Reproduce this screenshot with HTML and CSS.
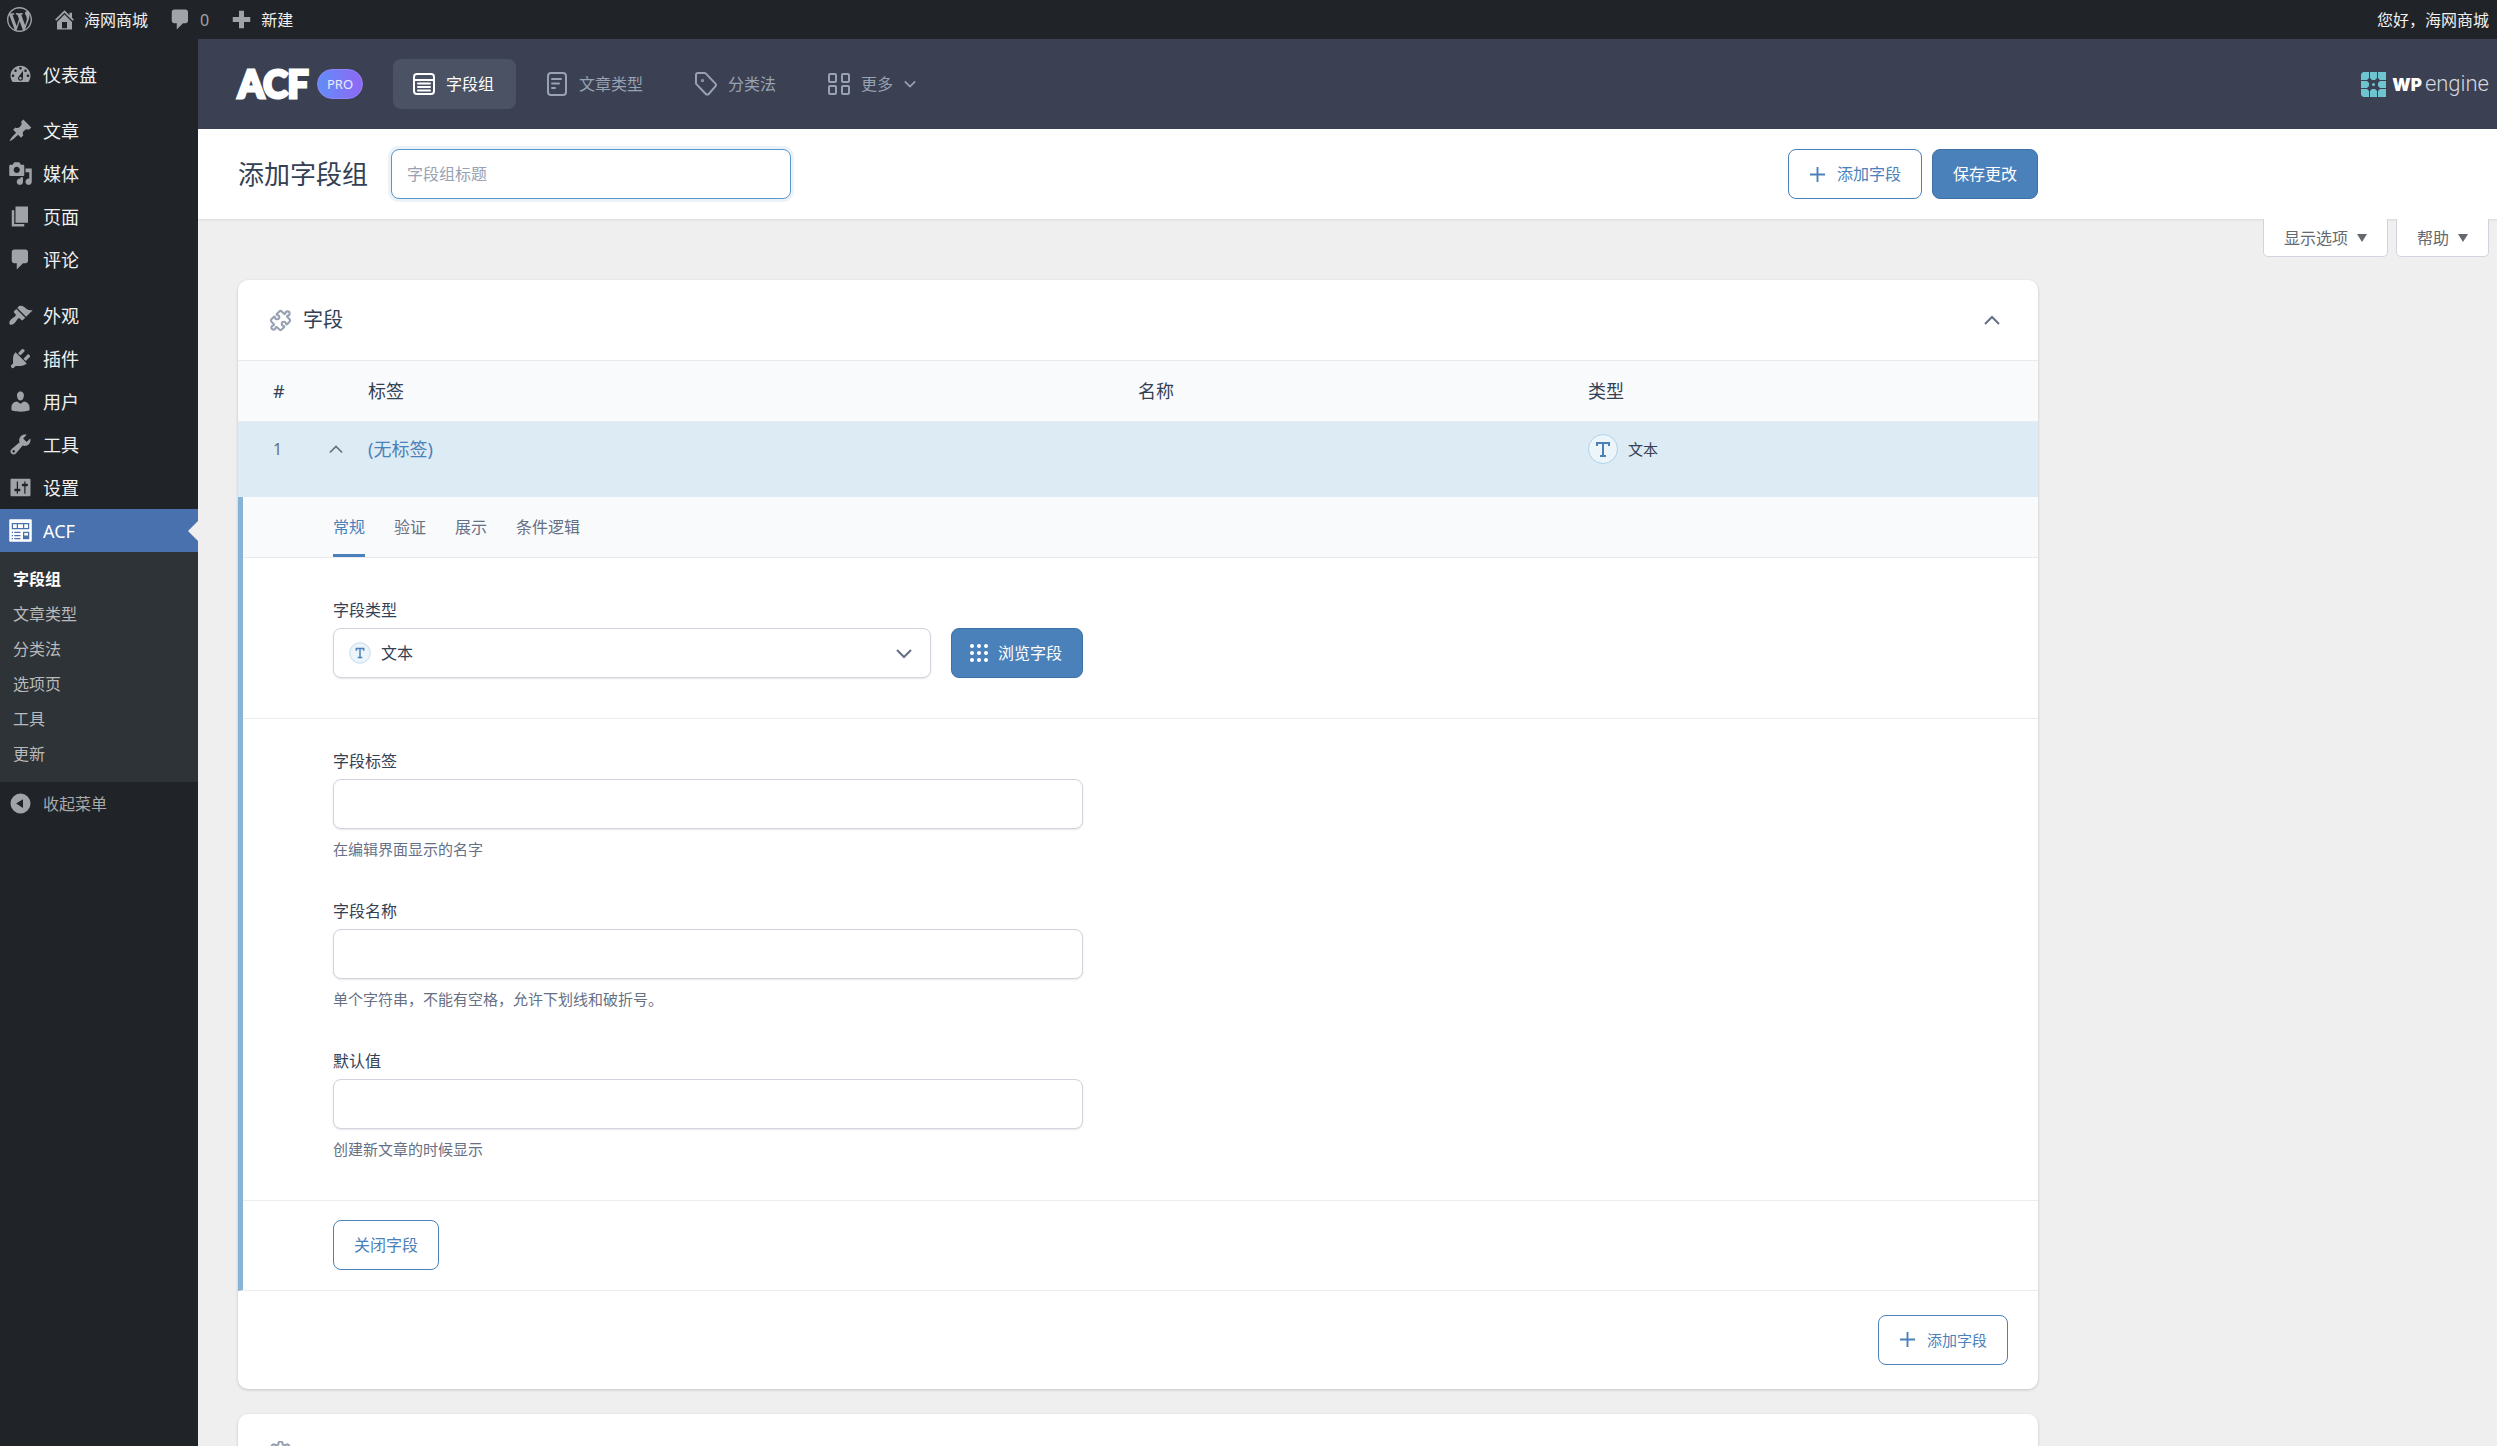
FILE: index.html
```html
<!DOCTYPE html>
<html lang="zh-CN">
<head>
<meta charset="utf-8">
<title>添加字段组</title>
<link rel="stylesheet" href="styles.css">
</head>
<body>
<div class="app">
  <header class="adminbar">
    <a class="adminbar-item adminbar-wp" href="#" aria-label="WordPress"><svg class="dash" viewBox="0 0 20 20"><path d="M20 10c0-5.51-4.49-10-10-10C4.48 0 0 4.49 0 10c0 5.52 4.48 10 10 10 5.51 0 10-4.48 10-10zM7.78 15.37L4.37 6.22c.55-.02 1.17-.08 1.17-.08.5-.06.44-1.13-.06-1.11 0 0-1.45.11-2.37.11-.18 0-.37 0-.58-.01C4.12 2.69 6.87 1.11 10 1.11c2.33 0 4.45.87 6.05 2.34-.68-.11-1.65.39-1.65 1.58 0 .74.45 1.36.9 2.1.35.61.55 1.36.55 2.46 0 1.49-1.4 5-1.4 5l-3.03-8.37c.54-.02.82-.17.82-.17.5-.05.44-1.25-.06-1.22 0 0-1.44.12-2.38.12-.87 0-2.33-.12-2.33-.12-.5-.03-.56 1.2-.06 1.22l.92.08 1.26 3.41zM17.41 10c.24-.64.74-1.87.43-4.25.7 1.29 1.05 2.71 1.05 4.25 0 3.29-1.73 6.24-4.4 7.78.97-2.59 1.94-5.2 2.92-7.78zM6.1 18.09C3.12 16.65 1.11 13.53 1.11 10c0-1.3.23-2.48.72-3.59C3.25 10.3 4.67 14.2 6.1 18.09zm4.03-6.63l2.58 6.98c-.86.29-1.76.45-2.71.45-.79 0-1.57-.11-2.29-.33.81-2.38 1.62-4.74 2.42-7.1z"/></svg></a>
    <a class="adminbar-item" href="#"><svg class="dash" viewBox="0 0 20 20"><path d="M16 8.5l1.53 1.53-1.06 1.06L10 4.6l-6.47 6.49-1.06-1.06L10 2.5l4 4v-2h2v4zm-6-2.46l6 5.99V18H4v-5.97zM12 17v-5H8v5h4z"/></svg>海网商城</a>
    <a class="adminbar-item adminbar-count" href="#"><svg class="dash" viewBox="0 0 20 20"><path d="M5 2h9c1.1 0 2 .9 2 2v7c0 1.1-.9 2-2 2h-2l-5 5v-5H5c-1.1 0-2-.9-2-2V4c0-1.1.9-2 2-2z"/></svg>0</a>
    <a class="adminbar-item" href="#"><svg class="dash" viewBox="0 0 20 20"><path d="M17 8v4h-5v5H8v-5H3V8h5V3h4v5z"/></svg>新建</a>
    <a class="adminbar-item adminbar-user" href="#">您好，海网商城</a>
  </header>

  <div class="shell">
    <nav class="sidebar" aria-label="主菜单">
      <ul class="menu">
        <li><a class="menu-link" href="#"><svg class="dash" viewBox="0 0 20 20"><path d="M3.76 16h12.48c1.1-1.37 1.76-3.11 1.76-5 0-4.42-3.58-8-8-8s-8 3.58-8 8c0 1.89.66 3.63 1.76 5zM10 4c.55 0 1 .45 1 1s-.45 1-1 1-1-.45-1-1 .45-1 1-1zM6 6c.55 0 1 .45 1 1s-.45 1-1 1-1-.45-1-1 .45-1 1-1zm8 0c.55 0 1 .45 1 1s-.45 1-1 1-1-.45-1-1 .45-1 1-1zm-5.37 5.55L12 7v6c0 1.1-.9 2-2 2s-2-.9-2-2c0-.57.24-1.08.63-1.45zM4 10c.55 0 1 .45 1 1s-.45 1-1 1-1-.45-1-1 .45-1 1-1zm12 0c.55 0 1 .45 1 1s-.45 1-1 1-1-.45-1-1 .45-1 1-1zm-5 3c0-.55-.45-1-1-1s-1 .45-1 1 .45 1 1 1 1-.45 1-1z"/></svg>仪表盘</a></li>
        <li class="menu-group"><a class="menu-link" href="#"><svg class="dash" viewBox="0 0 20 20"><path d="M10.44 3.02l1.82-1.82 6.36 6.35-1.83 1.82c-1.05-.68-2.48-.57-3.41.36l-.75.75c-.92.93-1.04 2.35-.35 3.41l-1.83 1.82-2.41-2.41-2.8 2.79c-.42.42-3.38 2.71-3.8 2.29s1.86-3.39 2.28-3.81l2.79-2.79L4.1 9.36l1.83-1.82c1.05.69 2.48.57 3.4-.36l.75-.75c.93-.92 1.05-2.35.36-3.41z"/></svg>文章</a></li>
        <li><a class="menu-link" href="#"><svg class="dash" viewBox="0 0 20 20"><path d="M13 11V4c0-.55-.45-1-1-1h-1.67L9 1H5L3.67 3H2c-.55 0-1 .45-1 1v7c0 .55.45 1 1 1h10c.55 0 1-.45 1-1zM7 4.5c1.38 0 2.5 1.12 2.5 2.5S8.38 9.5 7 9.5 4.5 8.38 4.5 7 5.62 4.5 7 4.5zM14 6h5v10.5c0 1.38-1.12 2.5-2.5 2.5S14 17.88 14 16.5s1.12-2.5 2.5-2.5c.17 0 .34.02.5.05V9h-3V6zm-4 8.05V13h2v3.5c0 1.38-1.12 2.5-2.5 2.5S7 17.88 7 16.5 8.12 14 9.5 14c.17 0 .34.02.5.05z"/></svg>媒体</a></li>
        <li><a class="menu-link" href="#"><svg class="dash" viewBox="0 0 20 20"><path d="M6 15V2h10v13H6zm-1 1h8v2H3V5h2v11z"/></svg>页面</a></li>
        <li><a class="menu-link" href="#"><svg class="dash" viewBox="0 0 20 20"><path d="M5 2h9c1.1 0 2 .9 2 2v7c0 1.1-.9 2-2 2h-2l-5 5v-5H5c-1.1 0-2-.9-2-2V4c0-1.1.9-2 2-2z"/></svg>评论</a></li>
        <li class="menu-group"><a class="menu-link" href="#"><svg class="dash" viewBox="0 0 20 20"><path d="M14.48 11.06L7.41 3.99l1.5-1.5c.5-.56 2.3-.47 3.51.32 1.21.8 1.43 1.28 2.91 2.1 1.18.64 2.45 1.26 4.45.85zm-.71.71L6.7 4.7 4.93 6.47c-.39.39-.39 1.02 0 1.41l1.06 1.06c.39.39.39 1.03 0 1.42-.6.6-1.43 1.11-2.21 1.69-.35.26-.7.53-1.01.84C1.43 14.23.4 16.08 1.4 17.07c.99 1 2.84-.03 4.18-1.36.31-.31.58-.66.85-1.02.57-.78 1.08-1.61 1.69-2.21.39-.39 1.02-.39 1.41 0l1.06 1.06c.39.39 1.02.39 1.41 0z"/></svg>外观</a></li>
        <li><a class="menu-link" href="#"><svg class="dash" viewBox="0 0 20 20"><path d="M13.11 4.36L9.87 7.6 8 5.73l3.24-3.24c.35-.34 1.05-.2 1.56.32.52.51.66 1.21.31 1.55zm-8 1.77l.91-1.12 9.01 9.01-1.19.84c-.71.71-2.63 1.16-3.82 1.16H6.14L4.9 17.26c-.59.59-1.54.59-2.12 0-.59-.58-.59-1.53 0-2.12l1.24-1.24v-3.88c0-1.13.4-3.19 1.09-3.89zm7.26 3.97l3.24-3.24c.34-.35 1.04-.21 1.55.31.52.51.66 1.21.31 1.55l-3.24 3.25z"/></svg>插件</a></li>
        <li><a class="menu-link" href="#"><svg class="dash" viewBox="0 0 20 20"><path d="M10 9.25c-2.27 0-2.73-3.44-2.73-3.44C7 4.02 7.82 2 9.97 2c2.16 0 2.98 2.02 2.71 3.81 0 0-.41 3.44-2.68 3.44zm0 2.57L12.72 10c2.39 0 4.52 2.33 4.52 4.53v2.49s-3.65 1.13-7.24 1.13c-3.65 0-7.24-1.13-7.24-1.13v-2.49c0-2.25 1.94-4.48 4.47-4.48z"/></svg>用户</a></li>
        <li><a class="menu-link" href="#"><svg class="dash" viewBox="0 0 20 20"><path d="M16.68 9.77c-1.34 1.34-3.3 1.67-4.95.99l-5.41 6.52c-.99.99-2.59.99-3.58 0s-.99-2.59 0-3.57l6.52-5.42c-.68-1.65-.35-3.61.99-4.95 1.28-1.28 3.12-1.62 4.72-1.06l-2.89 2.89 2.82 2.82 2.86-2.87c.53 1.58.18 3.39-1.08 4.65zM3.81 16.21c.4.39 1.04.39 1.43 0 .4-.4.4-1.04 0-1.43-.39-.4-1.03-.4-1.43 0-.39.39-.39 1.03 0 1.43z"/></svg>工具</a></li>
        <li><a class="menu-link" href="#"><svg class="dash" viewBox="0 0 20 20"><path d="M18 16V4c0-.55-.45-1-1-1H3c-.55 0-1 .45-1 1v12c0 .55.45 1 1 1h14c.55 0 1-.45 1-1zM8 11h1c.55 0 1 .45 1 1s-.45 1-1 1H8v1.5c0 .28-.22.5-.5.5s-.5-.22-.5-.5V13H6c-.55 0-1-.45-1-1s.45-1 1-1h1V5.5c0-.28.22-.5.5-.5s.5.22.5.5V11zm5-2h-1c-.55 0-1-.45-1-1s.45-1 1-1h1V5.5c0-.28.22-.5.5-.5s.5.22.5.5V7h1c.55 0 1 .45 1 1s-.45 1-1 1h-1v5.5c0 .28-.22.5-.5.5s-.5-.22-.5-.5V9z"/></svg>设置</a></li>
        <li>
          <a class="menu-link menu-link-current" href="#"><svg class="dash" viewBox="0 0 20 20"><path fill-rule="evenodd" d="M2 1h16c.6 0 1 .4 1 1v16c0 .6-.4 1-1 1H2c-.6 0-1-.4-1-1V2c0-.6.4-1 1-1zm1 3v5h14V4zm1 1h3v3H4zm4 0h4v3H8zm5 0h3v3h-3zM3 11v1h1v-1zm2 0v1h5v-1zm-2 2.500v1h1v-1zm2 0v1h5v-1zM3 16v1h1v-1zm2 0v1h5v-1zm7-5v6h5v-6zm1 1h3v2h-3z"/></svg>ACF</a>
          <ul class="submenu">
            <li><a class="submenu-link submenu-link-current" href="#">字段组</a></li>
            <li><a class="submenu-link" href="#">文章类型</a></li>
            <li><a class="submenu-link" href="#">分类法</a></li>
            <li><a class="submenu-link" href="#">选项页</a></li>
            <li><a class="submenu-link" href="#">工具</a></li>
            <li><a class="submenu-link" href="#">更新</a></li>
          </ul>
        </li>
      </ul>
      <button class="collapse" type="button"><svg class="dash" viewBox="0 0 20 20"><path fill-rule="evenodd" d="M10 2a8 8 0 1 1 0 16 8 8 0 0 1 0-16zm2 4.500L6.500 10l5.500 3.500z"/></svg>收起菜单</button>
    </nav>

    <main class="main">
      <div class="topnav">
        <a class="brand" href="#"><span class="brand-name">ACF</span><span class="brand-pro">PRO</span></a>
        <nav class="tabs-nav" aria-label="ACF">
          <a class="nav-link nav-link-current" href="#"><svg class="nav-icon" viewBox="0 0 22 24"><rect x="1" y="2" width="20" height="20" rx="3"/><path d="M1 8h20M5 11.500h12M5 15h12M5 18.500h12"/></svg>字段组</a>
          <a class="nav-link" href="#"><svg class="nav-icon" viewBox="0 0 22 24"><rect x="2" y="1" width="18" height="22" rx="3"/><path d="M6 7h9M6 11.500h7M6 16h3"/></svg>文章类型</a>
          <a class="nav-link" href="#"><svg class="nav-icon" viewBox="0 0 22 24"><path d="M1 3a2 2 0 0 1 2-2h6.500a2 2 0 0 1 1.400.6l9.500 10a2 2 0 0 1 0 2.700l-6.700 7.700a2 2 0 0 1-2.900 0L1.600 12.400A2 2 0 0 1 1 11z"/><circle cx="7.500" cy="8.500" r=".6"/></svg>分类法</a>
          <a class="nav-link" href="#"><svg class="nav-icon" viewBox="0 0 22 24"><rect x="1" y="2" width="7" height="8" rx="1"/><rect x="14" y="2" width="7" height="8" rx="1"/><rect x="1" y="14" width="7" height="8" rx="1"/><rect x="14" y="14" width="7" height="8" rx="1"/></svg>更多<svg class="nav-caret" viewBox="0 0 14 8"><path d="M1 1l6 6 6-6"/></svg></a>
        </nav>
        <a class="wpengine" href="#" aria-label="WP Engine">
          <svg class="wpengine-mark" viewBox="0 0 25 25"><path d="M2 0h6v6L6 8H0V2zM9 0h7v6l-2 2h-3L9 6zM17 0h8v8h-6l-2-2zM0 9h6l2 2v3l-2 2H0zM25 9h-6l-2 2v3l2 2h6zM0 17h6l2 2v6H2l-2-2zM9 25v-6l2-2h3l2 2v6zM17 25v-6l2-2h6v8z"/><circle cx="12.500" cy="12.500" r="1.500"/></svg>
          <span class="wpengine-name"><b>WP</b><span class="wpengine-thin">engine</span></span>
        </a>
      </div>

      <div class="toolbar">
        <div class="toolbar-inner">
          <h1 class="page-title"><label for="group-title">添加字段组</label></h1>
          <input class="control control-focused" id="group-title" type="text" placeholder="字段组标题">
          <div class="toolbar-actions">
            <button class="btn btn-outline" type="button"><svg class="plus" viewBox="0 0 18 18"><path d="M9 1v16M1 9h16"/></svg>添加字段</button>
            <button class="btn btn-primary" type="submit">保存更改</button>
          </div>
        </div>
      </div>

      <div class="screen-meta">
        <button class="meta-btn" type="button">显示选项<svg class="meta-caret" viewBox="0 0 10 8"><path d="M0 0h10L5 8z"/></svg></button>
        <button class="meta-btn" type="button">帮助<svg class="meta-caret" viewBox="0 0 10 8"><path d="M0 0h10L5 8z"/></svg></button>
      </div>

      <div class="content">
        <section class="card">
          <div class="card-head">
            <svg class="card-icon" viewBox="0 0 24 24"><path transform="rotate(45 12 12)" d="M7 5h2.800c.8 0 .9-.6.7-1.200a2 2 0 1 1 3 0c-.2.6-.1 1.200.7 1.200H17a2 2 0 0 1 2 2v2.800c0 .8-.6.9-1.200.7a2 2 0 1 0 0 3c.6-.2 1.200-.1 1.200.7V17a2 2 0 0 1-2 2h-2.800c-.8 0-.9.6-.7 1.200a2 2 0 1 1-3 0c.2-.6.1-1.200-.7-1.200H7a2 2 0 0 1-2-2v-2.800c0-.8.6-.9 1.200-.7a2 2 0 1 0 0-3C5.600 10.700 5 10.600 5 9.800V7a2 2 0 0 1 2-2z"/></svg>
            <h2 class="card-title">字段</h2>
            <button class="icon-btn card-toggle" type="button" aria-label="收起"><svg class="chevron" viewBox="0 0 16 10"><path d="M1 9l7-7 7 7"/></svg></button>
          </div>

          <table class="fields">
            <thead>
              <tr>
                <th class="col-order" scope="col">#</th>
                <th scope="col">标签</th>
                <th class="col-name" scope="col">名称</th>
                <th class="col-type" scope="col">类型</th>
              </tr>
            </thead>
            <tbody>
              <tr class="field-row">
                <td class="col-order"><div class="order">1<button class="icon-btn" type="button" aria-label="收起字段"><svg class="chevron chevron-small" viewBox="0 0 16 10"><path d="M1 9l7-7 7 7"/></svg></button></div></td>
                <td><a class="field-label" href="#">(无标签)</a></td>
                <td class="col-name"></td>
                <td class="col-type"><div class="type"><svg class="type-badge" viewBox="0 0 30 30"><circle cx="15" cy="15" r="14.500"/><path d="M9 12V9h12v3M15 9v13M12 22h6"/></svg>文本</div></td>
              </tr>
              <tr>
                <td class="editor-cell" colspan="4">
                  <div class="editor">
                    <nav class="editor-tabs" aria-label="字段设置">
                      <a class="tab tab-current" href="#">常规</a>
                      <a class="tab" href="#">验证</a>
                      <a class="tab" href="#">展示</a>
                      <a class="tab" href="#">条件逻辑</a>
                    </nav>
                    <div class="editor-section editor-section-type">
                      <div class="setting">
                        <label class="setting-label" for="field-type">字段类型</label>
                        <div class="type-picker">
                          <div class="select-wrap">
                            <select class="control" id="field-type"><option>文本</option></select>
                            <svg class="select-badge" viewBox="0 0 30 30"><circle cx="15" cy="15" r="14"/><path d="M10 12V9h10v3M15 9v12M12 21h6"/></svg>
                            <svg class="chevron select-caret" viewBox="0 0 16 10"><path d="M1 1l7 7 7-7"/></svg>
                          </div>
                          <button class="btn btn-primary btn-browse" type="button"><svg class="dots" viewBox="0 0 18 18"><circle cx="2" cy="2" r="2"/><circle cx="9" cy="2" r="2"/><circle cx="16" cy="2" r="2"/><circle cx="2" cy="9" r="2"/><circle cx="9" cy="9" r="2"/><circle cx="16" cy="9" r="2"/><circle cx="2" cy="16" r="2"/><circle cx="9" cy="16" r="2"/><circle cx="16" cy="16" r="2"/></svg>浏览字段</button>
                        </div>
                      </div>
                    </div>
                    <div class="editor-section">
                      <div class="setting">
                        <label class="setting-label" for="field-label">字段标签</label>
                        <input class="control" id="field-label" type="text">
                        <p class="hint">在编辑界面显示的名字</p>
                      </div>
                      <div class="setting">
                        <label class="setting-label" for="field-name">字段名称</label>
                        <input class="control" id="field-name" type="text">
                        <p class="hint">单个字符串，不能有空格，允许下划线和破折号。</p>
                      </div>
                      <div class="setting">
                        <label class="setting-label" for="field-default">默认值</label>
                        <input class="control" id="field-default" type="text">
                        <p class="hint">创建新文章的时候显示</p>
                      </div>
                    </div>
                    <div class="editor-foot">
                      <button class="btn btn-outline" type="button">关闭字段</button>
                    </div>
                  </div>
                </td>
              </tr>
            </tbody>
          </table>

          <div class="card-foot">
            <button class="btn btn-outline btn-small" type="button"><svg class="plus" viewBox="0 0 18 18"><path d="M9 1v16M1 9h16"/></svg>添加字段</button>
          </div>
        </section>

        <section class="card">
          <div class="card-head">
            <svg class="card-icon" viewBox="0 0 24 24"><circle cx="12" cy="12" r="3"/><path d="M10 2.500a2 2 0 0 1 4 0v.8l2.500 1 .7-.6a2 2 0 0 1 2.800 2.800l-.6.7 1 2.500h.8a2 2 0 0 1 0 4h-.8l-1 2.500.6.7a2 2 0 0 1-2.800 2.800l-.7-.6-2.500 1v.8a2 2 0 0 1-4 0v-.8l-2.500-1-.7.6A2 2 0 0 1 4 17l.6-.7-1-2.500h-.8a2 2 0 0 1 0-4h.8l1-2.500L4 6.500a2 2 0 0 1 2.800-2.800l.7.6 2.500-1z"/></svg>
          </div>
        </section>
      </div>
    </main>
  </div>
</div>
</body>
</html>
```
FILE: styles.css
```css
* { box-sizing: border-box; }

body {
  margin: 0;
  background: #efefef;
  color: #344054;
  font-family: "Noto Sans", "Noto Sans CJK SC", sans-serif;
  font-size: 16px;
  line-height: 24px;
}

ul { margin: 0; padding: 0; list-style: none; }
a { color: inherit; text-decoration: none; }
svg { display: block; flex: none; }
button, input, select { margin: 0; font: inherit; color: inherit; }
button { cursor: pointer; }

.app { display: flex; flex-direction: column; height: 100vh; overflow: hidden; }

/* Admin bar */
.adminbar {
  display: flex;
  align-items: center;
  gap: 20px;
  flex: none;
  height: 39px;
  padding: 0 8px 0 7px;
  background: #202327;
  color: #f0f0f1;
}
.adminbar-item { display: flex; align-items: center; gap: 7px; }
.adminbar-count { color: #a0a4a8; }
.adminbar-user { margin-left: auto; }
.dash { width: 25px; height: 25px; fill: #a0a4a8; }

.shell { display: flex; flex: 1; min-height: 0; }

/* Sidebar */
.sidebar { flex: none; width: 198px; padding-top: 14px; background: #202327; color: #f0f0f1; }
.menu-group { margin-top: 13px; }
.menu-link {
  display: flex;
  align-items: center;
  gap: 10px;
  height: 43px;
  padding-left: 8px;
  font-size: 18px;
}
.menu-link-current { position: relative; background: #4871ae; color: #fff; }
.menu-link-current .dash { fill: #fff; }
.menu-link-current::after {
  content: "";
  position: absolute;
  top: 12px;
  right: 0;
  border: 10px solid transparent;
  border-left-width: 0;
  border-right-color: #efefef;
}
.submenu { padding: 10px 0; background: #2e3337; }
.submenu-link { display: block; padding-left: 13px; color: #b8babc; line-height: 35px; }
.submenu-link-current { color: #fff; font-weight: 700; }
.collapse {
  display: flex;
  align-items: center;
  gap: 10px;
  height: 43px;
  padding: 0 8px;
  border: 0;
  background: none;
  color: #a7aaad;
}

/* ACF header */
.main { flex: 1; min-width: 0; }
.topnav {
  display: flex;
  align-items: center;
  height: 90px;
  padding: 0 8px 0 40px;
  background: #3b4052;
}
.brand { display: flex; align-items: center; width: 155px; gap: 11px; }
.brand-name {
  width: 68px;
  color: #fff;
  font: 900 37px/44px Lato, sans-serif;
  -webkit-text-stroke: 3px #fff;
}
.brand-pro {
  width: 46px;
  border: 1px solid #8f84fa;
  border-radius: 15px;
  background: linear-gradient(90deg, #618df8, #8f68f4);
  color: #eaecfd;
  font-size: 13px;
  line-height: 28px;
  text-align: center;
}
.tabs-nav { display: flex; gap: 10px; }
.nav-link {
  display: flex;
  align-items: center;
  gap: 11px;
  height: 50px;
  padding: 0 22px 0 20px;
  border-radius: 8px;
  color: #98a2b3;
}
.nav-link-current { background: #4a5263; color: #fff; }
.nav-icon { width: 22px; height: 24px; fill: none; stroke: currentColor; stroke-width: 2; stroke-linecap: round; }
.nav-caret { width: 12px; height: 8px; fill: none; stroke: currentColor; stroke-width: 2; }
.wpengine { display: flex; align-items: center; gap: 6px; margin-left: auto; }
.wpengine-mark { width: 25px; height: 25px; fill: #6fc5cf; }
.wpengine-name { display: flex; align-items: baseline; gap: 3px; color: #fff; font: 900 17px/28px Inter, sans-serif; }
.wpengine-thin { color: #d4d7dd; font: 300 22px/28px Roboto, sans-serif; }

/* Title toolbar */
.toolbar { height: 90px; padding: 0 40px; background: #fff; box-shadow: 0 1px 2px rgba(16, 24, 40, .1); }
.toolbar-inner { display: flex; align-items: center; gap: 23px; max-width: 1800px; height: 100%; }
.page-title { margin: 0; font-size: 26px; font-weight: 400; line-height: 36px; }
.toolbar-actions { display: flex; gap: 10px; margin-left: auto; }

.control {
  width: 100%;
  height: 50px;
  padding: 0 15px;
  border: 1px solid #d0d5dd;
  border-radius: 8px;
  outline: 0;
  background: #fff;
  box-shadow: 0 1px 2px rgba(16, 24, 40, .1);
}
.control::placeholder { color: #98a2b3; opacity: 1; }
.control-focused { max-width: 400px; border-color: #5897cb; box-shadow: 0 0 0 3px #ebf3f9; }

.btn {
  display: flex;
  align-items: center;
  justify-content: center;
  gap: 11px;
  height: 50px;
  padding: 0 20px;
  border: 1px solid #4b81ba;
  border-radius: 8px;
  white-space: nowrap;
}
.btn-outline { background: #fff; color: #4b81ba; }
.btn-primary { flex: none; border-color: #3e70a6; background: #4b81ba; color: #fff; }
.btn-browse { gap: 10px; padding: 0 20px 0 18px; }
.btn-small { font-size: 15px; }
.plus { width: 17px; height: 17px; fill: none; stroke: currentColor; stroke-width: 2; }
.dots { width: 18px; height: 18px; fill: currentColor; }

/* Screen options and help */
.screen-meta { display: flex; justify-content: flex-end; gap: 8px; padding: 0 8px; }
.meta-btn {
  display: flex;
  align-items: center;
  gap: 9px;
  height: 38px;
  padding: 0 20px;
  border: 1px solid #d0d5dd;
  border-top: 0;
  border-radius: 0 0 5px 5px;
  background: #fff;
  color: #646970;
}
.meta-caret { width: 10px; height: 8px; fill: #646970; }

/* Cards */
.content { display: flex; flex-direction: column; gap: 25px; max-width: 1880px; padding: 23px 40px; }
.card { border-radius: 10px; background: #fff; box-shadow: 0 1px 3px rgba(16, 24, 40, .2); }
.card-head { display: flex; align-items: center; gap: 10px; height: 80px; padding: 0 38px 0 30px; }
.card-icon { width: 25px; height: 25px; fill: none; stroke: #98a2b3; stroke-width: 2; stroke-linejoin: round; }
.card-title { margin: 0; font-size: 20px; font-weight: 400; }
.card-toggle { margin-left: auto; }
.icon-btn { padding: 0; border: 0; background: none; color: #667085; }
.chevron { width: 16px; height: 10px; fill: none; stroke: currentColor; stroke-width: 2; }
.chevron-small { width: 14px; }

/* Fields table */
.fields { width: 100%; table-layout: fixed; border-collapse: collapse; }
.fields th, .fields td { padding: 0; font-size: 18px; text-align: left; }
.fields thead th {
  height: 61px;
  border-top: 1px solid #e8eaee;
  border-bottom: 1px solid #e8eaee;
  background: #f9fafc;
  font-weight: 400;
}
.fields .col-order { width: 130px; padding-left: 35px; }
.col-name, .col-type { width: 450px; }
.fields .field-row td { height: 75px; padding-bottom: 21px; background: #ddebf4; }
.order { display: flex; align-items: center; justify-content: space-between; padding-right: 25px; color: #667085; font-size: 16px; }
.field-label { color: #4b81ba; }
.type { display: flex; align-items: center; gap: 10px; font-size: 15px; }
.type-badge { width: 30px; height: 30px; }
.type-badge, .select-badge { fill: none; stroke: #4b81ba; stroke-width: 2; }
.type-badge circle, .select-badge circle { fill: #ebf5fa; stroke: #b0d0e8; stroke-width: 1; }

/* Field editor */
.editor { border-left: 5px solid #86b4d6; border-bottom: 1px solid #eaecf0; font-size: 16px; }
.editor-tabs {
  display: flex;
  gap: 29px;
  height: 61px;
  padding-left: 90px;
  border-bottom: 1px solid #e8eaee;
  background: #f9fafc;
}
.tab { border-bottom: 3px solid transparent; color: #667085; line-height: 60px; }
.tab-current { border-color: #4b81ba; color: #4b81ba; }
.editor-section {
  display: flex;
  flex-direction: column;
  gap: 38px;
  padding: 30px 90px 39px;
  border-bottom: 1px solid #eaecf0;
}
.editor-section-type { padding: 40px 90px; }
.setting { max-width: 750px; }
.setting-label { display: block; margin-bottom: 6px; }
.type-picker { display: flex; gap: 20px; }
.select-wrap { position: relative; flex: 1; }
.select-wrap .control { padding-left: 47px; appearance: none; }
.select-badge { position: absolute; top: 14px; left: 16px; width: 22px; height: 22px; pointer-events: none; }
.select-caret { position: absolute; top: 21px; right: 19px; color: #667085; pointer-events: none; }
.hint { margin: 8px 0 0; color: #667085; font-size: 15px; }
.editor-foot { display: flex; padding: 19px 90px 20px; }
.card-foot { display: flex; justify-content: flex-end; padding: 24px 30px; }
```
